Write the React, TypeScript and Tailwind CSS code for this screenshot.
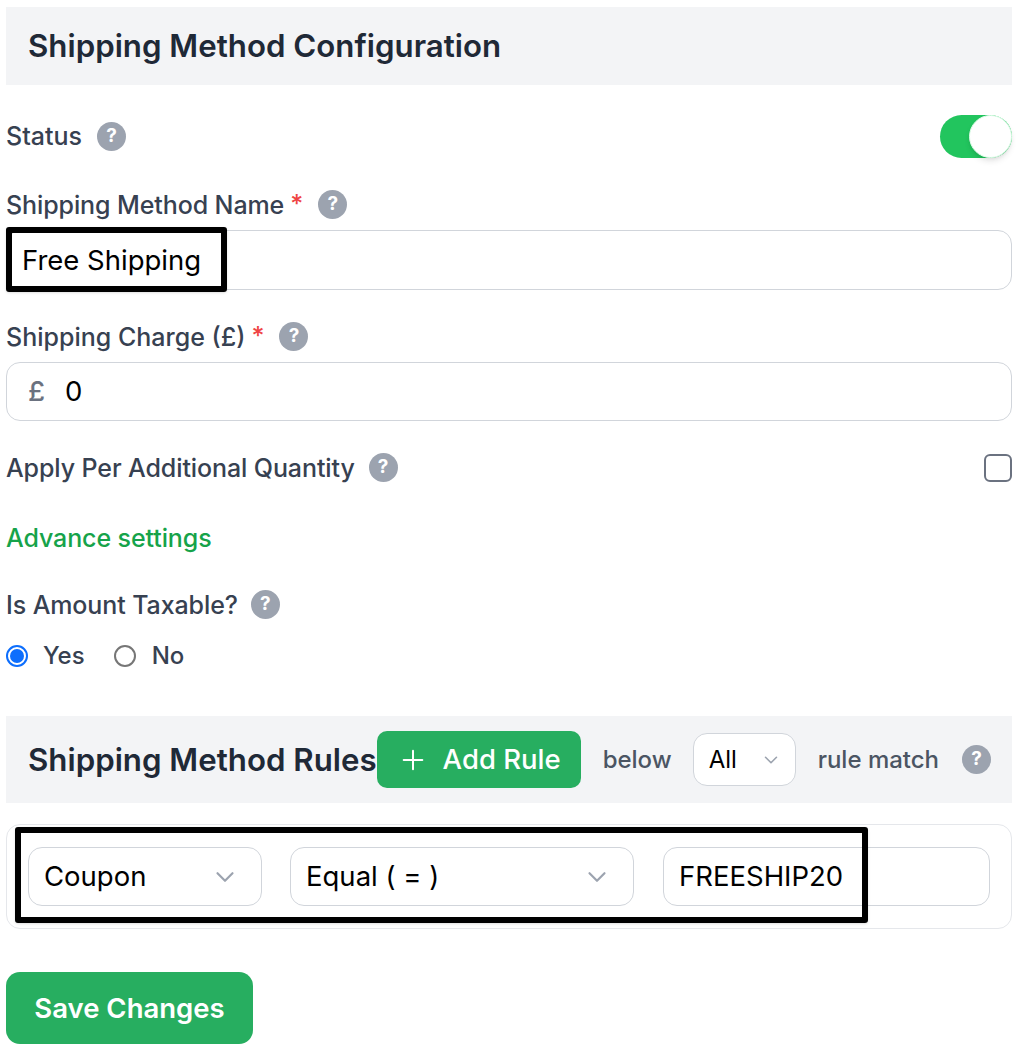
import { ChevronDown, Plus } from "lucide-react";

const labelClasses = "text-[25px] leading-[32px] font-medium tracking-[-0.1px] text-[#374151]";
const fieldClasses = "rounded-[14px] border border-[#d1d5db] bg-white";
const starClasses = "ml-[6px] text-[25px] font-medium text-[#ef4444]";

function Help() {
  return (
    <span className="flex size-[29px] shrink-0 items-center justify-center rounded-full bg-[#9ca3af] text-[19px] font-bold text-white">
      ?
    </span>
  );
}

function Select({ label, className }: { label: string; className: string }) {
  return (
    <div className={`flex h-[59px] items-center justify-between pr-[21px] pl-[15px] text-[27.5px] text-black ${fieldClasses} ${className}`}>
      <span className="pt-[1px]">{label}</span>
      <ChevronDown size={30} strokeWidth={1.75} className="text-[#9ca3af]" />
    </div>
  );
}

export default function App() {
  return (
    <main className="relative flex h-[1050px] w-[1018px] flex-col overflow-hidden bg-white px-[6px] pt-[7px] font-['Inter',sans-serif]">
      <header className="flex h-[78px] shrink-0 items-center bg-[#f3f4f6] px-[22px]">
        <h1 className="pt-[1px] text-[31.25px] font-semibold text-[#1f2937]">Shipping Method Configuration</h1>
      </header>

      <div className="mt-[29px] flex h-[44px] items-center justify-between">
        <div className="flex items-center gap-[15px]">
          <span className="text-[25px] leading-[32px] font-medium text-[#374151]">Status</span>
          <Help />
        </div>
        <div className="flex h-[43px] w-[72px] justify-end rounded-full bg-[#22c55e]">
          <div className="size-[43px] rounded-full border border-[#dcfce7] bg-white shadow-md" />
        </div>
      </div>

      <div className="mt-[32px] flex h-[29px] items-center">
        <span className={labelClasses}>Shipping Method Name</span>
        <span className={starClasses}>*</span>
        <span className="ml-[15px]">
          <Help />
        </span>
      </div>
      <div className={`mt-[11px] flex h-[60px] items-center px-[15px] pt-[1px] text-[27.5px] text-black ${fieldClasses}`}>Free Shipping</div>

      <div className="mt-[32px] flex h-[29px] items-center">
        <span className="text-[25px] leading-[32px] font-medium text-[#374151]">Shipping Charge (£)</span>
        <span className={starClasses}>*</span>
        <span className="ml-[15px]">
          <Help />
        </span>
      </div>
      <div className={`mt-[11px] flex h-[59px] items-center px-[21px] pt-[1px] text-[27.5px] ${fieldClasses}`}>
        <span className="font-medium text-[#6b7280]">£</span>
        <span className="ml-[20px] text-black">0</span>
      </div>

      <div className="mt-[32px] flex h-[29px] items-center justify-between">
        <div className="flex items-center gap-[14px]">
          <span className={labelClasses}>Apply Per Additional Quantity</span>
          <Help />
        </div>
        <div className="size-[28px] rounded-[6px] border-2 border-[#6b7280] bg-white" />
      </div>

      <a className="mt-[40px] h-[32px] text-[25px] leading-[32px] font-medium tracking-[-0.1px] text-[#16a34a]">Advance settings</a>

      <div className="mt-[36px] flex h-[29px] items-center gap-[13px]">
        <span className={labelClasses}>Is Amount Taxable?</span>
        <Help />
      </div>

      <div className="mt-[23px] flex h-[28px] items-center text-[24px] font-medium text-[#374151]">
        <span className="flex size-[22px] items-center justify-center rounded-full border-2 border-[#0d6efd]">
          <span className="size-[14px] rounded-full bg-[#0d6efd]" />
        </span>
        <span className="ml-[15px]">Yes</span>
        <span className="ml-[29px] size-[22px] rounded-full border-2 border-[#767676]" />
        <span className="ml-[16px]">No</span>
      </div>

      <section className="mt-[46px] flex h-[87px] shrink-0 items-center bg-[#f3f4f6] pr-[21px] pl-[22px]">
        <h2 className="pt-[1px] text-[31.25px] font-semibold whitespace-nowrap text-[#1f2937]">Shipping Method Rules</h2>
        <button className="flex h-[57px] w-[204px] shrink-0 items-center justify-center gap-[14px] rounded-[10px] bg-[#27ae60] text-[27.5px] font-medium text-white">
          <Plus size={32} strokeWidth={1.5} />
          <span className="pt-[1px]">Add Rule</span>
        </button>
        <span className="ml-[22px] text-[24px] font-medium text-[#4b5563]">below</span>
        <div className={`ml-[21px] flex h-[53px] w-[103px] items-center justify-between pr-[13px] pl-[15px] text-[24px] text-black ${fieldClasses}`}>
          <span>All</span>
          <ChevronDown size={22} strokeWidth={1.75} className="text-[#9ca3af]" />
        </div>
        <span className="ml-[22px] text-[24px] font-medium text-[#4b5563]">rule match</span>
        <span className="ml-auto">
          <Help />
        </span>
      </section>

      <section className="mt-[21px] flex h-[105px] shrink-0 items-center rounded-[14px] border border-[#e5e7eb] px-[21px]">
        <Select label="Coupon" className="w-[234px]" />
        <Select label="Equal ( = )" className="ml-[28px] w-[344px]" />
        <div className={`ml-[29px] flex h-[59px] flex-1 items-center px-[15px] pt-[1px] text-[27.5px] text-black ${fieldClasses}`}>FREESHIP20</div>
      </section>

      <button className="mt-[43px] h-[72px] w-[247px] shrink-0 rounded-[14px] bg-[#27ae60] pt-[1px] text-[27.5px] font-semibold text-white">Save Changes</button>

      <div className="pointer-events-none absolute top-[227px] left-[6px] h-[65px] w-[221px] rounded-[3px] border-[6px] border-black shadow-sm" />
      <div className="pointer-events-none absolute top-[827px] left-[15px] h-[96px] w-[853px] rounded-[3px] border-[6px] border-black shadow-sm" />
    </main>
  );
}
